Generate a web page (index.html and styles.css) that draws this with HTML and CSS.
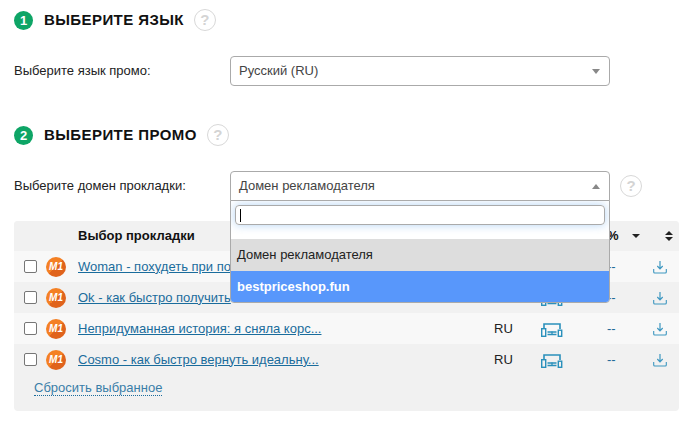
FILE: index.html
```html
<!DOCTYPE html>
<html lang="ru">
<head>
<meta charset="utf-8">
<title>Выберите промо</title>
<link rel="stylesheet" href="styles.css">
</head>
<body>
<svg class="defs" width="0" height="0">
  <symbol id="dev" viewBox="0 0 22 14">
    <path d="M3 5V1h16v5" fill="none" stroke="#2a90bb" stroke-width="1.600"/>
    <rect x="0.700" y="5.700" width="4" height="7.600" fill="none" stroke="#2a90bb" stroke-width="1.400"/>
    <rect x="17.300" y="7.200" width="3.400" height="6.100" fill="none" stroke="#2a90bb" stroke-width="1.400"/>
    <path d="M6.500 9h9M6.500 11.500h9" stroke="#2a90bb" stroke-width="1.300"/>
    <path d="M11 8.500v3.500" stroke="#2a90bb" stroke-width="1.300"/>
  </symbol>
  <symbol id="dl" viewBox="0 0 14 14">
    <path d="M7 1v7.500M4.300 6l2.700 2.800L9.700 6" fill="none" stroke="#3d97c0" stroke-width="1.200"/>
    <path d="M0.700 9v3q0 1 1 1h10.600q1 0 1-1V9" fill="none" stroke="#3d97c0" stroke-width="1.100"/>
  </symbol>
</svg>

<section class="step step-one">
  <header class="step-head">
    <span class="num">1</span>
    <h2>ВЫБЕРИТЕ ЯЗЫК</h2>
    <span class="help">?</span>
  </header>
  <div class="field">
    <span class="label">Выберите язык промо:</span>
    <div class="select"><span>Русский (RU)</span><i class="caret"></i></div>
  </div>
</section>

<section class="step step-two">
  <header class="step-head">
    <span class="num">2</span>
    <h2>ВЫБЕРИТЕ ПРОМО</h2>
    <span class="help">?</span>
  </header>
  <div class="field">
    <span class="label">Выберите домен прокладки:</span>
    <div class="select open">
      <span>Домен рекламодателя</span><i class="caret up"></i>
      <div class="drop">
        <div class="search"><div class="input"><i class="cursor"></i></div></div>
        <div class="opt current">Домен рекламодателя</div>
        <div class="opt active">bestpriceshop.fun</div>
      </div>
    </div>
    <span class="help">?</span>
  </div>

  <div class="table">
    <div class="row head">
      <span class="c-check"></span>
      <span class="c-logo"></span>
      <span class="c-title">Выбор прокладки</span>
      <span class="c-geo"></span>
      <span class="c-dev"></span>
      <span class="c-pct">%</span>
      <span class="c-sort"><i class="sort-down"></i></span>
      <span class="c-dl"><i class="sort-both"></i></span>
    </div>
    <div class="row">
      <span class="c-check"><i class="box"></i></span>
      <span class="c-logo"><b class="m1">M1</b></span>
      <span class="c-title"><a href="#">Woman - похудеть при по</a></span>
      <span class="c-geo"></span>
      <span class="c-dev"><svg class="i-dev"><use href="#dev"/></svg></span>
      <span class="c-pct">--</span>
      <span class="c-sort"></span>
      <span class="c-dl"><svg class="i-dl"><use href="#dl"/></svg></span>
    </div>
    <div class="row">
      <span class="c-check"><i class="box"></i></span>
      <span class="c-logo"><b class="m1">M1</b></span>
      <span class="c-title"><a href="#">Ok - как быстро получить</a></span>
      <span class="c-geo"></span>
      <span class="c-dev"><svg class="i-dev"><use href="#dev"/></svg></span>
      <span class="c-pct">--</span>
      <span class="c-sort"></span>
      <span class="c-dl"><svg class="i-dl"><use href="#dl"/></svg></span>
    </div>
    <div class="row">
      <span class="c-check"><i class="box"></i></span>
      <span class="c-logo"><b class="m1">M1</b></span>
      <span class="c-title"><a href="#">Непридуманная история: я сняла корс...</a></span>
      <span class="c-geo">RU</span>
      <span class="c-dev"><svg class="i-dev"><use href="#dev"/></svg></span>
      <span class="c-pct">--</span>
      <span class="c-sort"></span>
      <span class="c-dl"><svg class="i-dl"><use href="#dl"/></svg></span>
    </div>
    <div class="row">
      <span class="c-check"><i class="box"></i></span>
      <span class="c-logo"><b class="m1">M1</b></span>
      <span class="c-title"><a href="#">Cosmo - как быстро вернуть идеальну...</a></span>
      <span class="c-geo">RU</span>
      <span class="c-dev"><svg class="i-dev"><use href="#dev"/></svg></span>
      <span class="c-pct">--</span>
      <span class="c-sort"></span>
      <span class="c-dl"><svg class="i-dl"><use href="#dl"/></svg></span>
    </div>
    <div class="foot"><a href="#" class="reset">Сбросить выбранное</a></div>
  </div>
</section>
</body>
</html>
```

FILE: styles.css
```css
* { box-sizing: border-box; }
html, body { height: 423px; overflow: hidden; }
body {
  margin: 0;
  padding: 9px 10px 0 14px;
  background: #fff;
  color: #222;
  font: 13px/20px "Liberation Sans", Arial, sans-serif;
}
.defs { position: absolute; }
i { display: block; }

.step-two { margin-top: 38px; }
.step-head { display: flex; align-items: center; height: 22px; }
.num {
  width: 19px; height: 19px; border-radius: 50%;
  background: #0ea566; color: #fff;
  font-size: 13px; font-weight: 700; line-height: 19px; text-align: center;
}
.step-head h2 {
  margin: 0 10px 0 11px;
  color: #111;
  font-size: 15px; font-weight: 700; line-height: 22px; letter-spacing: .42px;
}
.help {
  width: 22px; height: 22px; border: 1px solid #d8d8d8; border-radius: 50%;
  color: #d4d4d4; background: #fff;
  font-size: 15px; font-weight: 700; line-height: 20px; text-align: center;
}

.field { display: flex; align-items: center; height: 30px; margin-top: 25px; }
.label { width: 216px; flex: none; color: #222; }
.select {
  position: relative;
  display: flex; align-items: center; justify-content: space-between;
  width: 380px; height: 30px; padding: 0 9px 0 8px;
  border: 1px solid #aaa; border-radius: 4px;
  background: #fff; color: #444;
}
.select.open { border-radius: 4px 4px 0 0; }
.field > .help { margin-left: 10px; }
.caret { width: 0; height: 0; border: 4px solid transparent; border-top: 5px solid #888; border-bottom: 0; }
.caret.up { border-top: 0; border-bottom: 5px solid #888; }

.drop {
  position: absolute; z-index: 5; top: 28px; left: -1px; right: -1px;
  border: 1px solid #aaa; border-radius: 0 0 4px 4px;
  background: #fff; color: #222; overflow: hidden;
}
.search { height: 38px; padding: 4px 4px 0; }
.input {
  height: 20px; padding: 3px 0 0 4px;
  border: 1px solid #aaa; border-radius: 4px;
  box-shadow: 0 0 10px rgba(88,160,230,.45);
}
.cursor { width: 1px; height: 13px; background: #000; }
.opt { height: 32px; padding: 0 6px; line-height: 31px; }
.opt.current { background: #ddd; }
.opt.active { height: 31px; background: #5897fb; color: #fff; font-weight: 700; }

.table {
  margin-top: 20px; width: 665px; height: 190px;
  border-radius: 4px; background: #f1f1f1; overflow: hidden;
}
.row { display: flex; align-items: center; height: 31px; }
.row:nth-child(even) { background: #f8f8f8; }
.row:nth-child(odd) { background: #f1f1f1; }
.row.head { height: 30px; color: #111; font-weight: 700; }
.c-check { width: 32px; padding-left: 10px; flex: none; }
.c-logo { width: 32px; flex: none; }
.c-title { width: 416px; flex: none; }
.c-geo { width: 47px; flex: none; color: #222; }
.c-dev { width: 66px; flex: none; }
.c-pct { width: 25px; flex: none; color: #1c6a99; }
.head .c-pct { color: #111; }
.c-sort { width: 20px; flex: none; }
.c-dl { flex: none; }
.box { width: 13px; height: 13px; border: 1px solid #767676; border-radius: 2px; background: #fff; }
.m1 {
  display: block; width: 20px; height: 20px; border-radius: 50%;
  background: linear-gradient(135deg, #f48024 0 50%, #e0631c 50% 100%);
  color: #fff; font-size: 10px; font-style: italic; font-weight: 700; line-height: 20px; text-align: center;
}
a { color: #1a6c9c; }
.c-title a { text-decoration: underline; }
.i-dev { display: block; width: 22px; height: 14px; margin-top: 3px; }
.i-dl { display: block; width: 14px; height: 14px; margin: 1px 0 0 1px; }
.sort-down { width: 0; height: 0; border: 4px solid transparent; border-top: 4px solid #222; border-bottom: 0; }
.sort-both { position: relative; width: 8px; height: 10px; margin-left: 13px; }
.sort-both::before, .sort-both::after {
  content: ""; position: absolute; left: 0; border: 4px solid transparent;
}
.sort-both::before { top: 0; border-top: 0; border-bottom: 4px solid #222; }
.sort-both::after { bottom: 0; border-bottom: 0; border-top: 4px solid #222; }
.foot { padding: 3px 0 0 20px; }
.reset { text-decoration: none; border-bottom: 1px dotted #1a6c9c; color: #3a7ea8; }
```
